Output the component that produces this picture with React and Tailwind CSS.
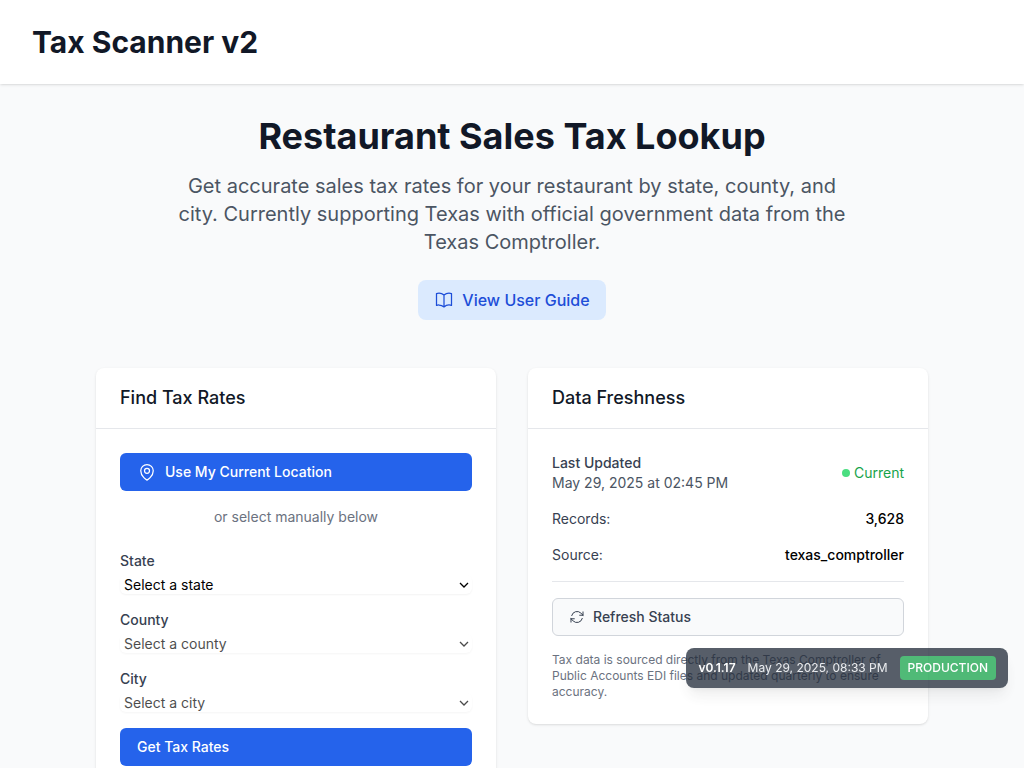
import { HiOutlineArrowPath, HiOutlineBookOpen, HiOutlineMapPin } from 'react-icons/hi2';

function Card({ title, children }) {
  return (
    <section className="rounded-lg bg-white shadow-sm">
      <div className="border-b border-[#e5e7eb] px-6 py-4">
        <h2 className="text-lg font-medium text-[#111827]">{title}</h2>
      </div>
      <div className="p-6">{children}</div>
    </section>
  );
}

function SelectField({ id, label, placeholder, disabled }) {
  return (
    <div>
      <label htmlFor={id} className="block text-sm font-medium text-[#374151]">
        {label}
      </label>
      <div className="relative mt-1 text-black">
        <select
          id={id}
          disabled={disabled}
          className="peer block w-full appearance-none rounded-md py-px pr-6 pl-1 text-sm leading-[17px] shadow-xs disabled:opacity-70"
        >
          <option>{placeholder}</option>
        </select>
        <svg
          viewBox="0 0 10 6"
          fill="none"
          stroke="currentColor"
          strokeWidth="1.3"
          className="pointer-events-none absolute inset-y-0 right-[3px] my-auto h-[6px] w-[10px] peer-disabled:opacity-70"
          aria-hidden="true"
        >
          <path d="M1 1l4 4 4-4" />
        </svg>
      </div>
    </div>
  );
}

function DataRow({ label, value }) {
  return (
    <div className="flex items-center justify-between text-sm">
      <dt className="text-[#374151]">{label}</dt>
      <dd className="font-medium text-black">{value}</dd>
    </div>
  );
}

function LookupForm() {
  return (
    <form className="flex flex-col" onSubmit={(e) => e.preventDefault()}>
      <button
        type="button"
        className="flex w-full items-center rounded-md border border-transparent bg-[#2563eb] px-4 py-2 text-sm font-medium text-white antialiased"
      >
        <HiOutlineMapPin className="mr-2 size-5" aria-hidden="true" />
        Use My Current Location
      </button>
      <p className="mt-4 mb-6 text-center text-sm text-[#6b7280]">or select manually below</p>
      <div className="flex flex-col gap-4">
        <SelectField id="state" label="State" placeholder="Select a state" />
        <SelectField id="county" label="County" placeholder="Select a county" disabled />
        <SelectField id="city" label="City" placeholder="Select a city" disabled />
        <button
          type="submit"
          className="flex w-full items-center rounded-md border border-transparent bg-[#2563eb] px-4 py-2 text-sm font-medium text-white"
        >
          Get Tax Rates
        </button>
      </div>
    </form>
  );
}

function Freshness() {
  return (
    <div className="flex flex-col gap-4">
      <div className="flex items-center justify-between text-sm">
        <div>
          <p className="font-medium text-[#374151]">Last Updated</p>
          <p className="text-[#4b5563]">May 29, 2025 at 02:45 PM</p>
        </div>
        <div className="flex items-center gap-1 text-[#16a34a]">
          <span className="size-2 rounded-full bg-[#4ade80]" />
          Current
        </div>
      </div>
      <dl className="flex flex-col gap-4">
        <DataRow label="Records:" value="3,628" />
        <DataRow label="Source:" value="texas_comptroller" />
      </dl>
      <div className="border-t border-[#e5e7eb] pt-4">
        <button
          type="button"
          className="flex w-full items-center rounded-md border border-[#d1d5db] bg-[#f9fafb] px-4 py-2 text-sm font-medium text-[#374151]"
        >
          <HiOutlineArrowPath className="mr-2 size-4" aria-hidden="true" />
          Refresh Status
        </button>
      </div>
      <p className="text-xs text-[#6b7280]">
        Tax data is sourced directly from the Texas Comptroller of Public Accounts EDI files and
        updated quarterly to ensure accuracy.
      </p>
    </div>
  );
}

export default function App() {
  return (
    <div className="min-h-screen bg-[#f9fafb] font-['Inter',sans-serif]">
      <header className="bg-white px-8 py-6 shadow-sm">
        <h1 className="text-3xl font-bold text-[#111827]">Tax Scanner v2</h1>
      </header>

      <main className="mx-auto max-w-4xl p-8">
        <div className="mb-12 flex flex-col items-center text-center">
          <h2 className="text-4xl font-bold text-[#111827]">Restaurant Sales Tax Lookup</h2>
          <p className="mt-4 max-w-2xl text-xl text-[#4b5563]">
            Get accurate sales tax rates for your restaurant by state, county, and city. Currently
            supporting Texas with official government data from the Texas Comptroller.
          </p>
          <a
            href="#guide"
            className="mt-6 inline-flex items-center rounded-lg bg-[#dbeafe] px-4 py-2 font-medium text-[#1d4ed8]"
          >
            <HiOutlineBookOpen className="mr-2 size-5" aria-hidden="true" />
            View User Guide
          </a>
        </div>

        <div className="grid grid-cols-1 items-start gap-8 md:grid-cols-2">
          <Card title="Find Tax Rates">
            <LookupForm />
          </Card>
          <Card title="Data Freshness">
            <Freshness />
          </Card>
        </div>
      </main>

      <div className="fixed right-4 bottom-20 flex items-center gap-3 rounded-lg bg-[#1f2937] px-3 py-2 text-xs text-white opacity-75 shadow-lg">
        <span className="font-semibold">v0.1.17</span>
        <span className="text-[#e5e7eb]">May 29, 2025, 08:33 PM</span>
        <span className="rounded bg-[#16a34a] px-2 py-1 font-medium">PRODUCTION</span>
      </div>
    </div>
  );
}
